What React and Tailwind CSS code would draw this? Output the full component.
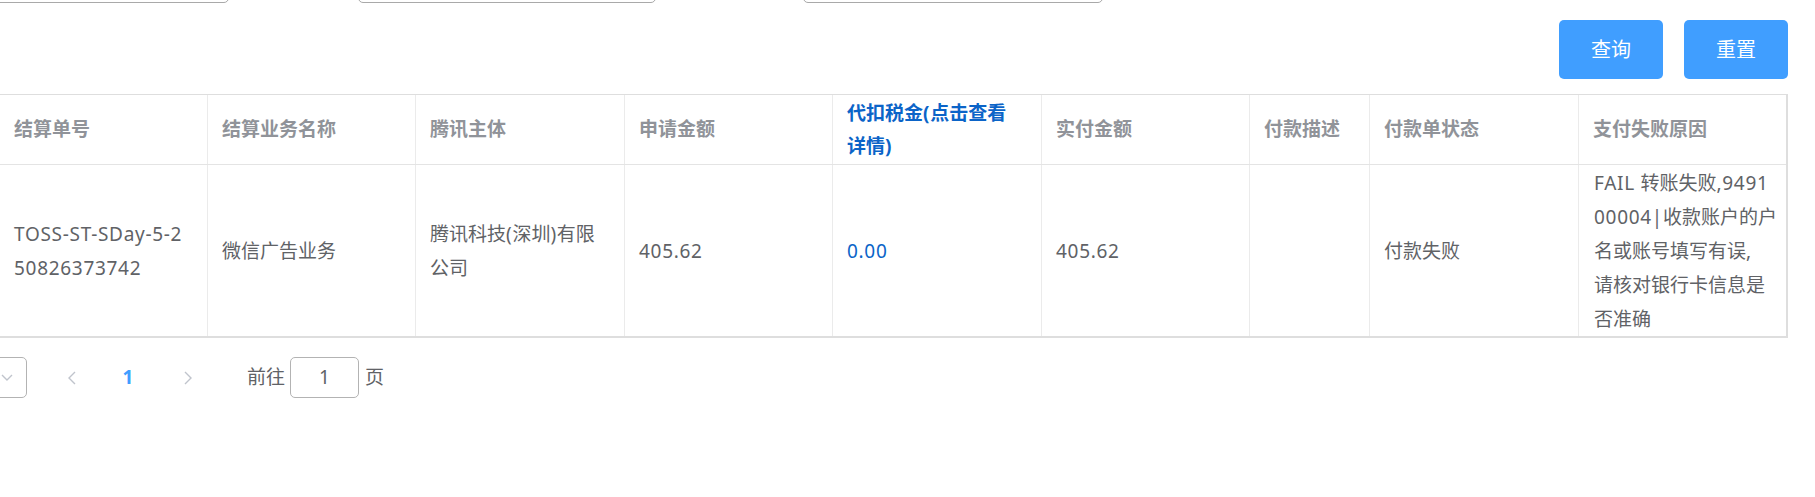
import React from "react";

const font = { fontFamily: '"Noto Sans", "Noto Sans CJK SC", sans-serif' };

const headers = [
  { text: ["结算单号"] },
  { text: ["结算业务名称"] },
  { text: ["腾讯主体"] },
  { text: ["申请金额"] },
  { text: ["代扣税金(点击查看", "详情)"], link: true },
  { text: ["实付金额"] },
  { text: ["付款描述"] },
  { text: ["付款单状态"] },
  { text: ["支付失败原因"] },
];

const row = [
  { text: ["TOSS-ST-SDay-5-2", "50826373742"] },
  { text: ["微信广告业务"] },
  { text: ["腾讯科技(深圳)有限", "公司"] },
  { text: ["405.62"] },
  { text: ["0.00"], link: true },
  { text: ["405.62"] },
  { text: [""] },
  { text: ["付款失败"] },
  { text: ["FAIL 转账失败,9491", "00004|收款账户的户", "名或账号填写有误,", "请核对银行卡信息是", "否准确"] },
];

// latin runs are a touch wider in the original (YaHei), so space them out a little
function Mixed({ text }) {
  const parts = text.split(/([\u0020-\u007e]+)/).filter(Boolean);
  return parts.map((p, i) =>
    /^[\u0020-\u007e]+$/.test(p) ? (
      <span key={i} className="tracking-[0.7px]">
        {p}
      </span>
    ) : (
      <span key={i}>{p}</span>
    )
  );
}

function Lines({ lines }) {
  return lines.map((l, i) => (
    <div key={i} className="whitespace-nowrap">
      <Mixed text={l} />
    </div>
  ));
}

function Chevron({ dir }) {
  const pts = dir === "left" ? "7,1 1,7 7,13" : dir === "right" ? "1,1 7,7 1,13" : "1,1 6,6 11,1";
  const w = dir === "down" ? 12 : 8;
  const h = dir === "down" ? 7 : 14;
  return (
    <svg width={w} height={h} viewBox={`0 0 ${w} ${h}`} fill="none">
      <polyline points={pts} stroke="#c0c4cc" strokeWidth="1.4" />
    </svg>
  );
}

export default function App() {
  return (
    <div className="w-[1815px] h-[497px] overflow-hidden bg-white text-[19px] text-[#606266]" style={font}>
      {/* filter inputs, mostly scrolled off the top */}
      <div className="flex -mt-[38px] h-[41px]">
        <div className="-ml-[70px] w-[299px] h-[41px] rounded-[5px] border border-[#a9a9a9]" />
        <div className="ml-[129px] w-[298px] h-[41px] rounded-[5px] border border-[#a9a9a9]" />
        <div className="ml-[147px] w-[300px] h-[41px] rounded-[5px] border border-[#a9a9a9]" />
      </div>

      <div className="flex justify-end gap-[21px] pr-[27px] mt-[17px]">
        <button className="w-[104px] h-[59px] rounded-[5px] bg-[#409eff] text-white text-[20px]">查询</button>
        <button className="w-[104px] h-[59px] rounded-[5px] bg-[#409eff] text-white text-[20px]">重置</button>
      </div>

      <div className="mt-[15px] w-[1788px] border-t border-r-2 border-b-2 border-[#dedede]">
        <div className="grid grid-cols-[208px_208px_209px_208px_209px_208px_120px_209px_1fr] border-b border-[#e4e4e4]">
          {headers.map((h, i) => (
            <div
              key={i}
              className={`h-[69px] flex flex-col justify-center px-[14px] font-bold leading-[33px] ${
                i < 8 ? "border-r border-[#ebebeb]" : ""
              } ${h.link ? "text-[#0b64c8]" : "text-[#909399]"}`}
            >
              <Lines lines={h.text} />
            </div>
          ))}
        </div>
        <div className="grid grid-cols-[208px_208px_209px_208px_209px_208px_120px_209px_1fr]">
          {row.map((c, i) => (
            <div
              key={i}
              className={`h-[171px] flex flex-col justify-center px-[14px] leading-[34px] ${
                i < 8 ? "border-r border-[#ebebeb]" : "pl-[15px]"
              } ${c.link ? "text-[#0b64c8]" : ""}`}
            >
              <Lines lines={c.text} />
            </div>
          ))}
        </div>
      </div>

      {/* pagination */}
      <div className="flex items-center mt-[19px] h-[41px]">
        <div className="-ml-[93px] w-[120px] h-[41px] rounded-[5px] border border-[#b3b3b3] flex items-center justify-end pr-[13px]">
          <Chevron dir="down" />
        </div>
        <div className="ml-[25px] w-[40px] flex justify-center">
          <Chevron dir="left" />
        </div>
        <div className="ml-[16px] w-[40px] text-center font-bold text-[#409eff]">1</div>
        <div className="ml-[20px] w-[40px] flex justify-center">
          <Chevron dir="right" />
        </div>
        <span className="ml-[39px]">前往</span>
        <div className="ml-[5px] w-[69px] h-[41px] rounded-[5px] border border-[#b3b3b3] flex items-center justify-center">
          1
        </div>
        <span className="ml-[6px]">页</span>
      </div>
    </div>
  );
}
